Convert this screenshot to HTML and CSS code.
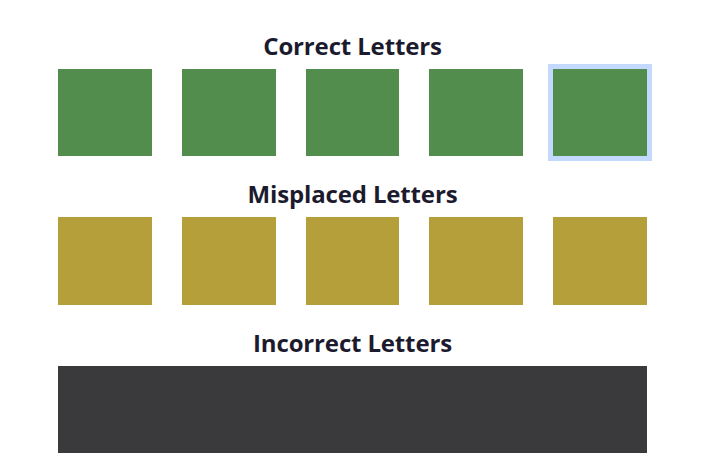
FILE: index.html
```html
<!DOCTYPE html>
<html lang="en">

<head>
    <meta charset="UTF-8">
    <meta name="viewport" content="width=device-width, initial-scale=1.0">
    <title>Letter Board</title>
    <link rel="stylesheet" href="styles.css">
</head>

<body>
    <div class="board">
        <section class="group">
            <h2>Correct Letters</h2>
            <div class="tiles">
                <div class="tile correct"></div>
                <div class="tile correct"></div>
                <div class="tile correct"></div>
                <div class="tile correct"></div>
                <div class="tile correct active"></div>
            </div>
        </section>

        <section class="group">
            <h2>Misplaced Letters</h2>
            <div class="tiles">
                <div class="tile present"></div>
                <div class="tile present"></div>
                <div class="tile present"></div>
                <div class="tile present"></div>
                <div class="tile present"></div>
            </div>
        </section>

        <section class="group">
            <h2>Incorrect Letters</h2>
            <div class="absent-box"></div>
        </section>
    </div>
</body>

</html>
```

FILE: styles.css
```css
* {
    margin: 0;
    padding: 0;
    box-sizing: border-box;
}

:root {
    --correct: #538d4e;
    --present: #b59f3b;
    --absent: #3a3a3c;
    --text: #1c1b2e;
    --focus: #c3dafe;
}

body {
    background: white;
    font-family: 'Open Sans', 'Noto Sans', sans-serif;
    color: var(--text);
}

.board {
    width: 705px;
    padding: 31px 58px 0;
}

.group {
    margin-bottom: 23px;
}

.group h2 {
    font-size: 24px;
    font-weight: 700;
    line-height: 30px;
    letter-spacing: -0.15px;
    text-align: center;
    margin-bottom: 8px;
}

.tiles {
    display: grid;
    grid-template-columns: repeat(5, 1fr);
    gap: 30px;
}

.tile {
    height: 87.3px;
}

.tile.correct {
    background: var(--correct);
}

.tile.present {
    background: var(--present);
}

.tile.active {
    box-shadow: 0 0 0 5px var(--focus);
}

.absent-box {
    height: 87.3px;
    background: var(--absent);
}
```
